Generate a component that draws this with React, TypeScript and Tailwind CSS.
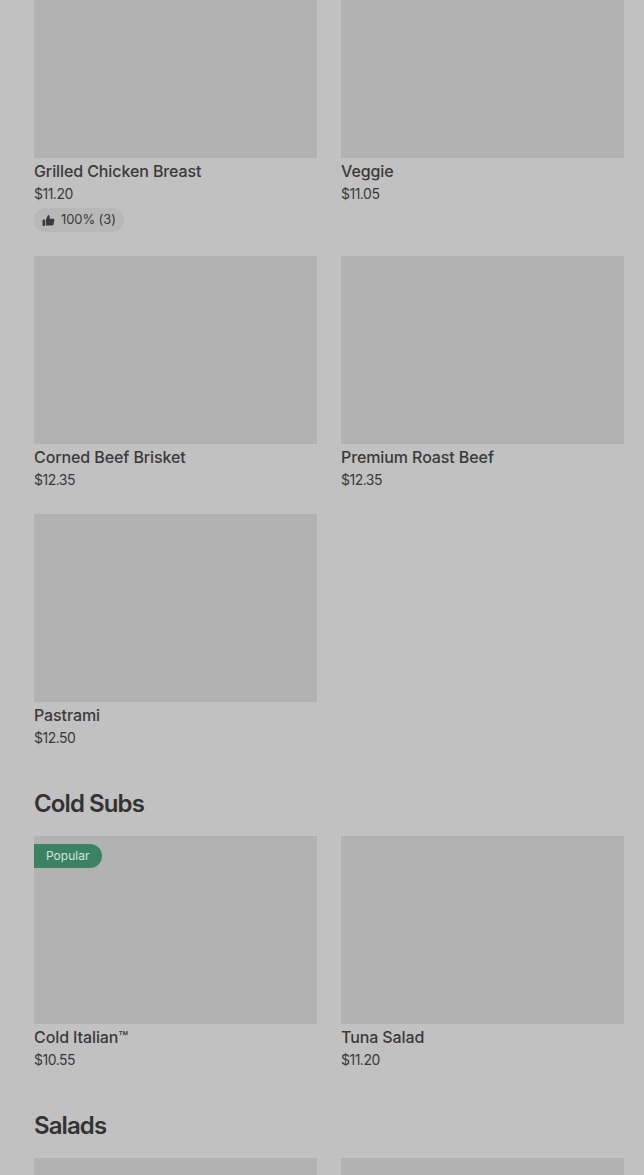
const Thumb = () => (
  <svg width="13" height="13" viewBox="0 0 12 12" fill="currentColor">
    <path d="M0.5 5.2h2.2v5.8H0.5z" />
    <path d="M3.5 5.2 5.6 1c.9 0 1.5.6 1.5 1.5v1.9h3.2c.7 0 1.2.6 1.1 1.3l-.7 3.8c-.1.6-.6 1-1.200 1H3.500z" />
  </svg>
);

type Item = { name: string; price: string; rating?: string; tag?: string };

const ItemCard = ({ item, imageClass = "h-[188px]" }: { item: Item; imageClass?: string }) => (
  <div className="flex flex-col">
    <div className={`${imageClass} bg-[#b2b2b2] relative`}>
      {item.tag && (
        <span className="absolute left-0 top-2 h-6 pl-3 pr-[13px] flex items-center rounded-r-full bg-[#3b8263] text-[#d3e4dc] text-xs">
          {item.tag}
        </span>
      )}
    </div>
    <div className="text-base leading-6 mt-[1px] font-medium tracking-[-0.1px] text-[#3a3a3a]">{item.name}</div>
    <div className="text-sm leading-5 mt-[1px] text-[#3a3a3a] tracking-[-0.5px]">{item.price}</div>
    {item.rating && (
      <div className="mt-1 self-start h-6 pl-2 pr-2 flex items-center gap-[6px] rounded-full bg-[#b8b8b8] text-[13px] tracking-[-0.1px] text-[#3a3a3a]">
        <Thumb />
        {item.rating}
      </div>
    )}
  </div>
);

const Heading = ({ children }: { children: string }) => (
  <h2 className="mt-10 mb-[17px] text-2xl leading-[31px] font-semibold tracking-[-0.9px] text-[#333333]">{children}</h2>
);

export default function App() {
  return (
    <div className="w-[644px] h-[1175px] overflow-hidden bg-[#c1c1c1] pl-[34px] pr-5 font-['Inter',sans-serif]">
      <div className="grid grid-cols-2 gap-x-6 gap-y-6">
        <ItemCard imageClass="h-[158px]" item={{ name: "Grilled Chicken Breast", price: "$11.20", rating: "100% (3)" }} />
        <ItemCard imageClass="h-[158px]" item={{ name: "Veggie", price: "$11.05" }} />
        <ItemCard item={{ name: "Corned Beef Brisket", price: "$12.35" }} />
        <ItemCard item={{ name: "Premium Roast Beef", price: "$12.35" }} />
        <ItemCard item={{ name: "Pastrami", price: "$12.50" }} />
      </div>
      <Heading>Cold Subs</Heading>
      <div className="grid grid-cols-2 gap-x-6 gap-y-6">
        <ItemCard item={{ name: "Cold Italian™", price: "$10.55", tag: "Popular" }} />
        <ItemCard item={{ name: "Tuna Salad", price: "$11.20" }} />
      </div>
      <Heading>Salads</Heading>
      <div className="grid grid-cols-2 gap-x-6 gap-y-6">
        <ItemCard item={{ name: "", price: "" }} />
        <ItemCard item={{ name: "", price: "" }} />
      </div>
    </div>
  );
}
